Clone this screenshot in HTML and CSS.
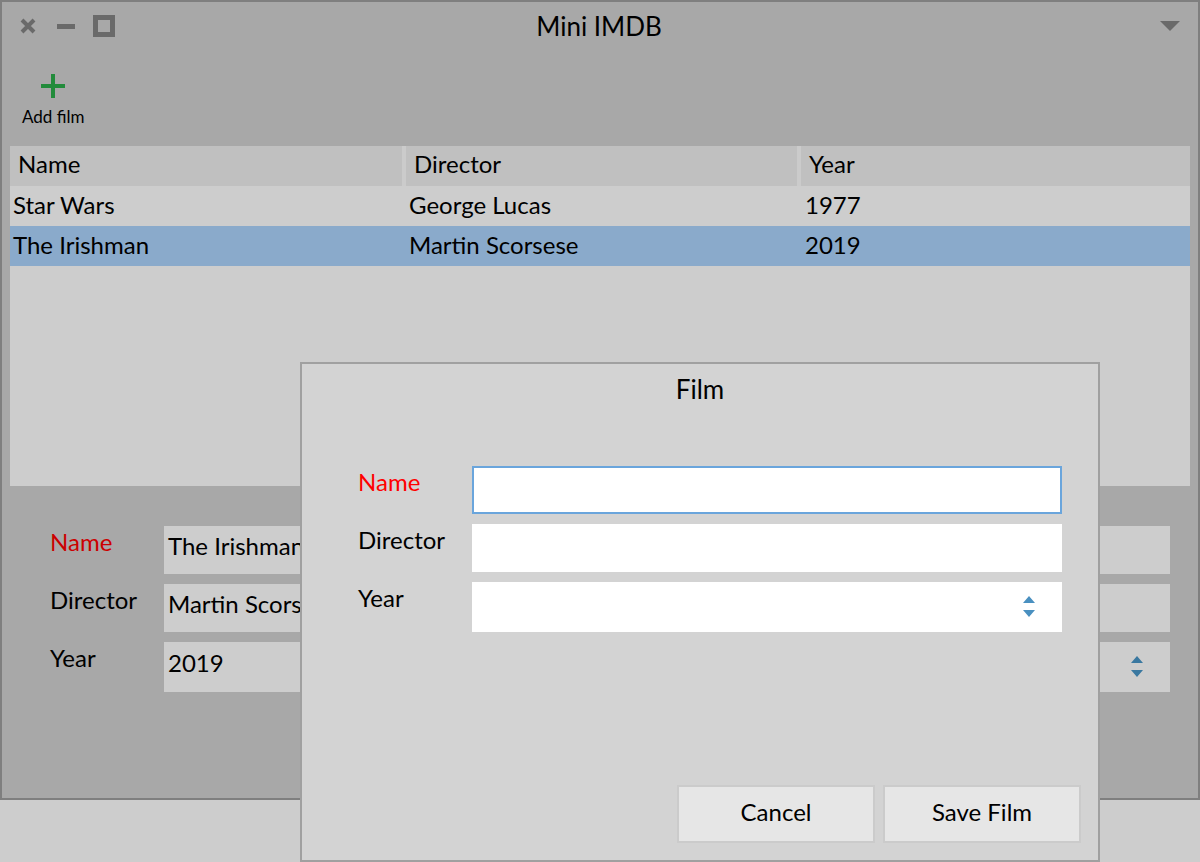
FILE: index.html
```html
<!DOCTYPE html>
<html>
<head>
<meta charset="utf-8">
<title>Mini IMDB</title>
<link rel="stylesheet" href="styles.css">
</head>
<body>
<div class="window">
  <div class="titlebar">
    <div class="win-buttons">
      <svg class="wb" width="16" height="16" viewBox="0 0 16 16"><path d="M2 2 L14 14 M14 2 L2 14" stroke="#6a6a6a" stroke-width="4"/></svg>
      <svg class="wb" width="20" height="16" viewBox="0 0 20 16"><rect x="1" y="6" width="18" height="5" fill="#6a6a6a"/></svg>
      <svg class="wb" width="22" height="22" viewBox="0 0 22 22"><rect x="2.5" y="2.5" width="17" height="17" fill="none" stroke="#6a6a6a" stroke-width="5"/></svg>
    </div>
    <div class="title">Mini IMDB</div>
    <svg class="menu-arrow" width="20" height="12" viewBox="0 0 20 12"><path d="M0 1 L20 1 L10 11 Z" fill="#6a6a6a"/></svg>
  </div>
  <div class="toolbar">
    <div class="tool">
      <svg width="24" height="24" viewBox="0 0 24 24"><path d="M12 0 V24 M0 12 H24" stroke="#228b3b" stroke-width="4"/></svg>
      <span>Add film</span>
    </div>
  </div>
  <div class="table">
    <div class="row header">
      <div class="hcell">Name</div>
      <div class="hcell">Director</div>
      <div class="hcell">Year</div>
    </div>
    <div class="row">
      <div class="cell">Star Wars</div>
      <div class="cell">George Lucas</div>
      <div class="cell c3">1977</div>
    </div>
    <div class="row selected">
      <div class="cell">The Irishman</div>
      <div class="cell">Martin Scorsese</div>
      <div class="cell c3">2019</div>
    </div>
  </div>
  <div class="form main-form">
    <div class="label required">Name</div>
    <div class="field">The Irishman</div>
    <div class="label">Director</div>
    <div class="field">Martin Scorsese</div>
    <div class="label">Year</div>
    <div class="field tall">2019
      <svg class="spin" width="14" height="24" viewBox="0 0 14 24"><path d="M7 1 L13 8 L1 8 Z M1 15 L13 15 L7 22 Z" fill="#3a78a0"/></svg>
    </div>
  </div>
</div>

<div class="dialog">
  <div class="dtitle">Film</div>
  <div class="form dform">
    <div class="label dreq">Name</div>
    <div class="field dfield focus"></div>
    <div class="label">Director</div>
    <div class="field dfield"></div>
    <div class="label">Year</div>
    <div class="field dfield tall">
      <svg class="spin" width="14" height="24" viewBox="0 0 14 24"><path d="M7 1 L13 8 L1 8 Z M1 15 L13 15 L7 22 Z" fill="#4a90c0"/></svg>
    </div>
  </div>
  <div class="buttons">
    <div class="btn">Cancel</div>
    <div class="btn">Save Film</div>
  </div>
</div>
</body>
</html>
```

FILE: styles.css
```css
* { box-sizing: border-box; }
html, body { margin: 0; padding: 0; }
body {
  width: 1200px;
  height: 862px;
  background: #cdcdcd;
  font-family: Lato, "Noto Sans", sans-serif;
  color: #000;
  position: relative;
  overflow: hidden;
}
.window {
  width: 1200px;
  height: 800px;
  background: #a8a8a8;
  border: 2px solid #7f7f7f;
  display: flex;
  flex-direction: column;
}
.titlebar {
  height: 50px;
  display: flex;
  align-items: center;
  position: relative;
}
.win-buttons {
  display: flex;
  align-items: center;
  padding-left: 18px;
  width: 200px;
}
.win-buttons .wb:nth-child(1) { margin-right: 20px; margin-top: -2px; }
.win-buttons .wb:nth-child(2) { margin-right: 17px; margin-top: -2px; }
.win-buttons .wb:nth-child(3) { margin-top: -2px; }
.title {
  flex: 1;
  text-align: center;
  font-size: 26px;
  margin-top: -2px;
  padding-right: 4px;
}
.menu-arrow { margin-right: 18px; margin-left: 160px; margin-top: -2px; }
.toolbar {
  height: 94px;
  padding-left: 20px;
  padding-top: 22px;
}
.tool {
  display: inline-flex;
  flex-direction: column;
  align-items: center;
}
.tool span {
  font-size: 17px;
  margin-top: 8px;
}
.table {
  margin: 0 8px;
  height: 340px;
  background: #cdcdcd;
  flex: none;
}
.row {
  display: grid;
  grid-template-columns: 392px 391px 1fr;
  column-gap: 4px;
  height: 40px;
  align-items: center;
  font-size: 24px;
  padding-bottom: 4px;
}
.row.header { background: #cbcbcb; padding-bottom: 0; }
.hcell {
  background: #c0c0c0;
  height: 40px;
  line-height: 36px;
  padding-left: 8px;
}
.cell { padding-left: 3px; }
.cell.c3 { padding-left: 4px; }
.row.selected { background: #8aaacb; }
.form {
  display: grid;
  grid-template-columns: 114px 1fr;
  row-gap: 10px;
}
.main-form {
  padding: 40px 28px 0 48px;
}
.label {
  font-size: 24px;
  padding-top: 1px;
}
.required { color: #cc0000; }
.field {
  height: 48px;
  background: #cdcdcd;
  font-size: 24px;
  padding-left: 4px;
  padding-bottom: 9px;
  display: flex;
  align-items: center;
  position: relative;
}
.field.tall { height: 50px; }
.spin { position: absolute; right: 26px; top: 13px; }
.dialog {
  position: absolute;
  left: 300px;
  top: 362px;
  width: 800px;
  height: 500px;
  background: #d3d3d3;
  border: 2px solid #a0a0a0;
  display: flex;
  flex-direction: column;
}
.dtitle {
  text-align: center;
  font-size: 26px;
  padding-top: 9px;
  height: 102px;
}
.dform {
  padding: 0 36px 0 56px;
}
.dreq { color: #ff0000; }
.dfield { background: #ffffff; }
.dfield.focus { border: 2px solid #6aa5dc; }
.buttons {
  margin-top: auto;
  display: flex;
  justify-content: flex-end;
  gap: 8px;
  padding: 0 17px 17px 0;
}
.btn {
  width: 198px;
  height: 58px;
  background: #e6e6e6;
  border: 2px solid #cbcbcb;
  display: flex;
  align-items: center;
  justify-content: center;
  font-size: 24px;
  padding-bottom: 5px;
}
```
